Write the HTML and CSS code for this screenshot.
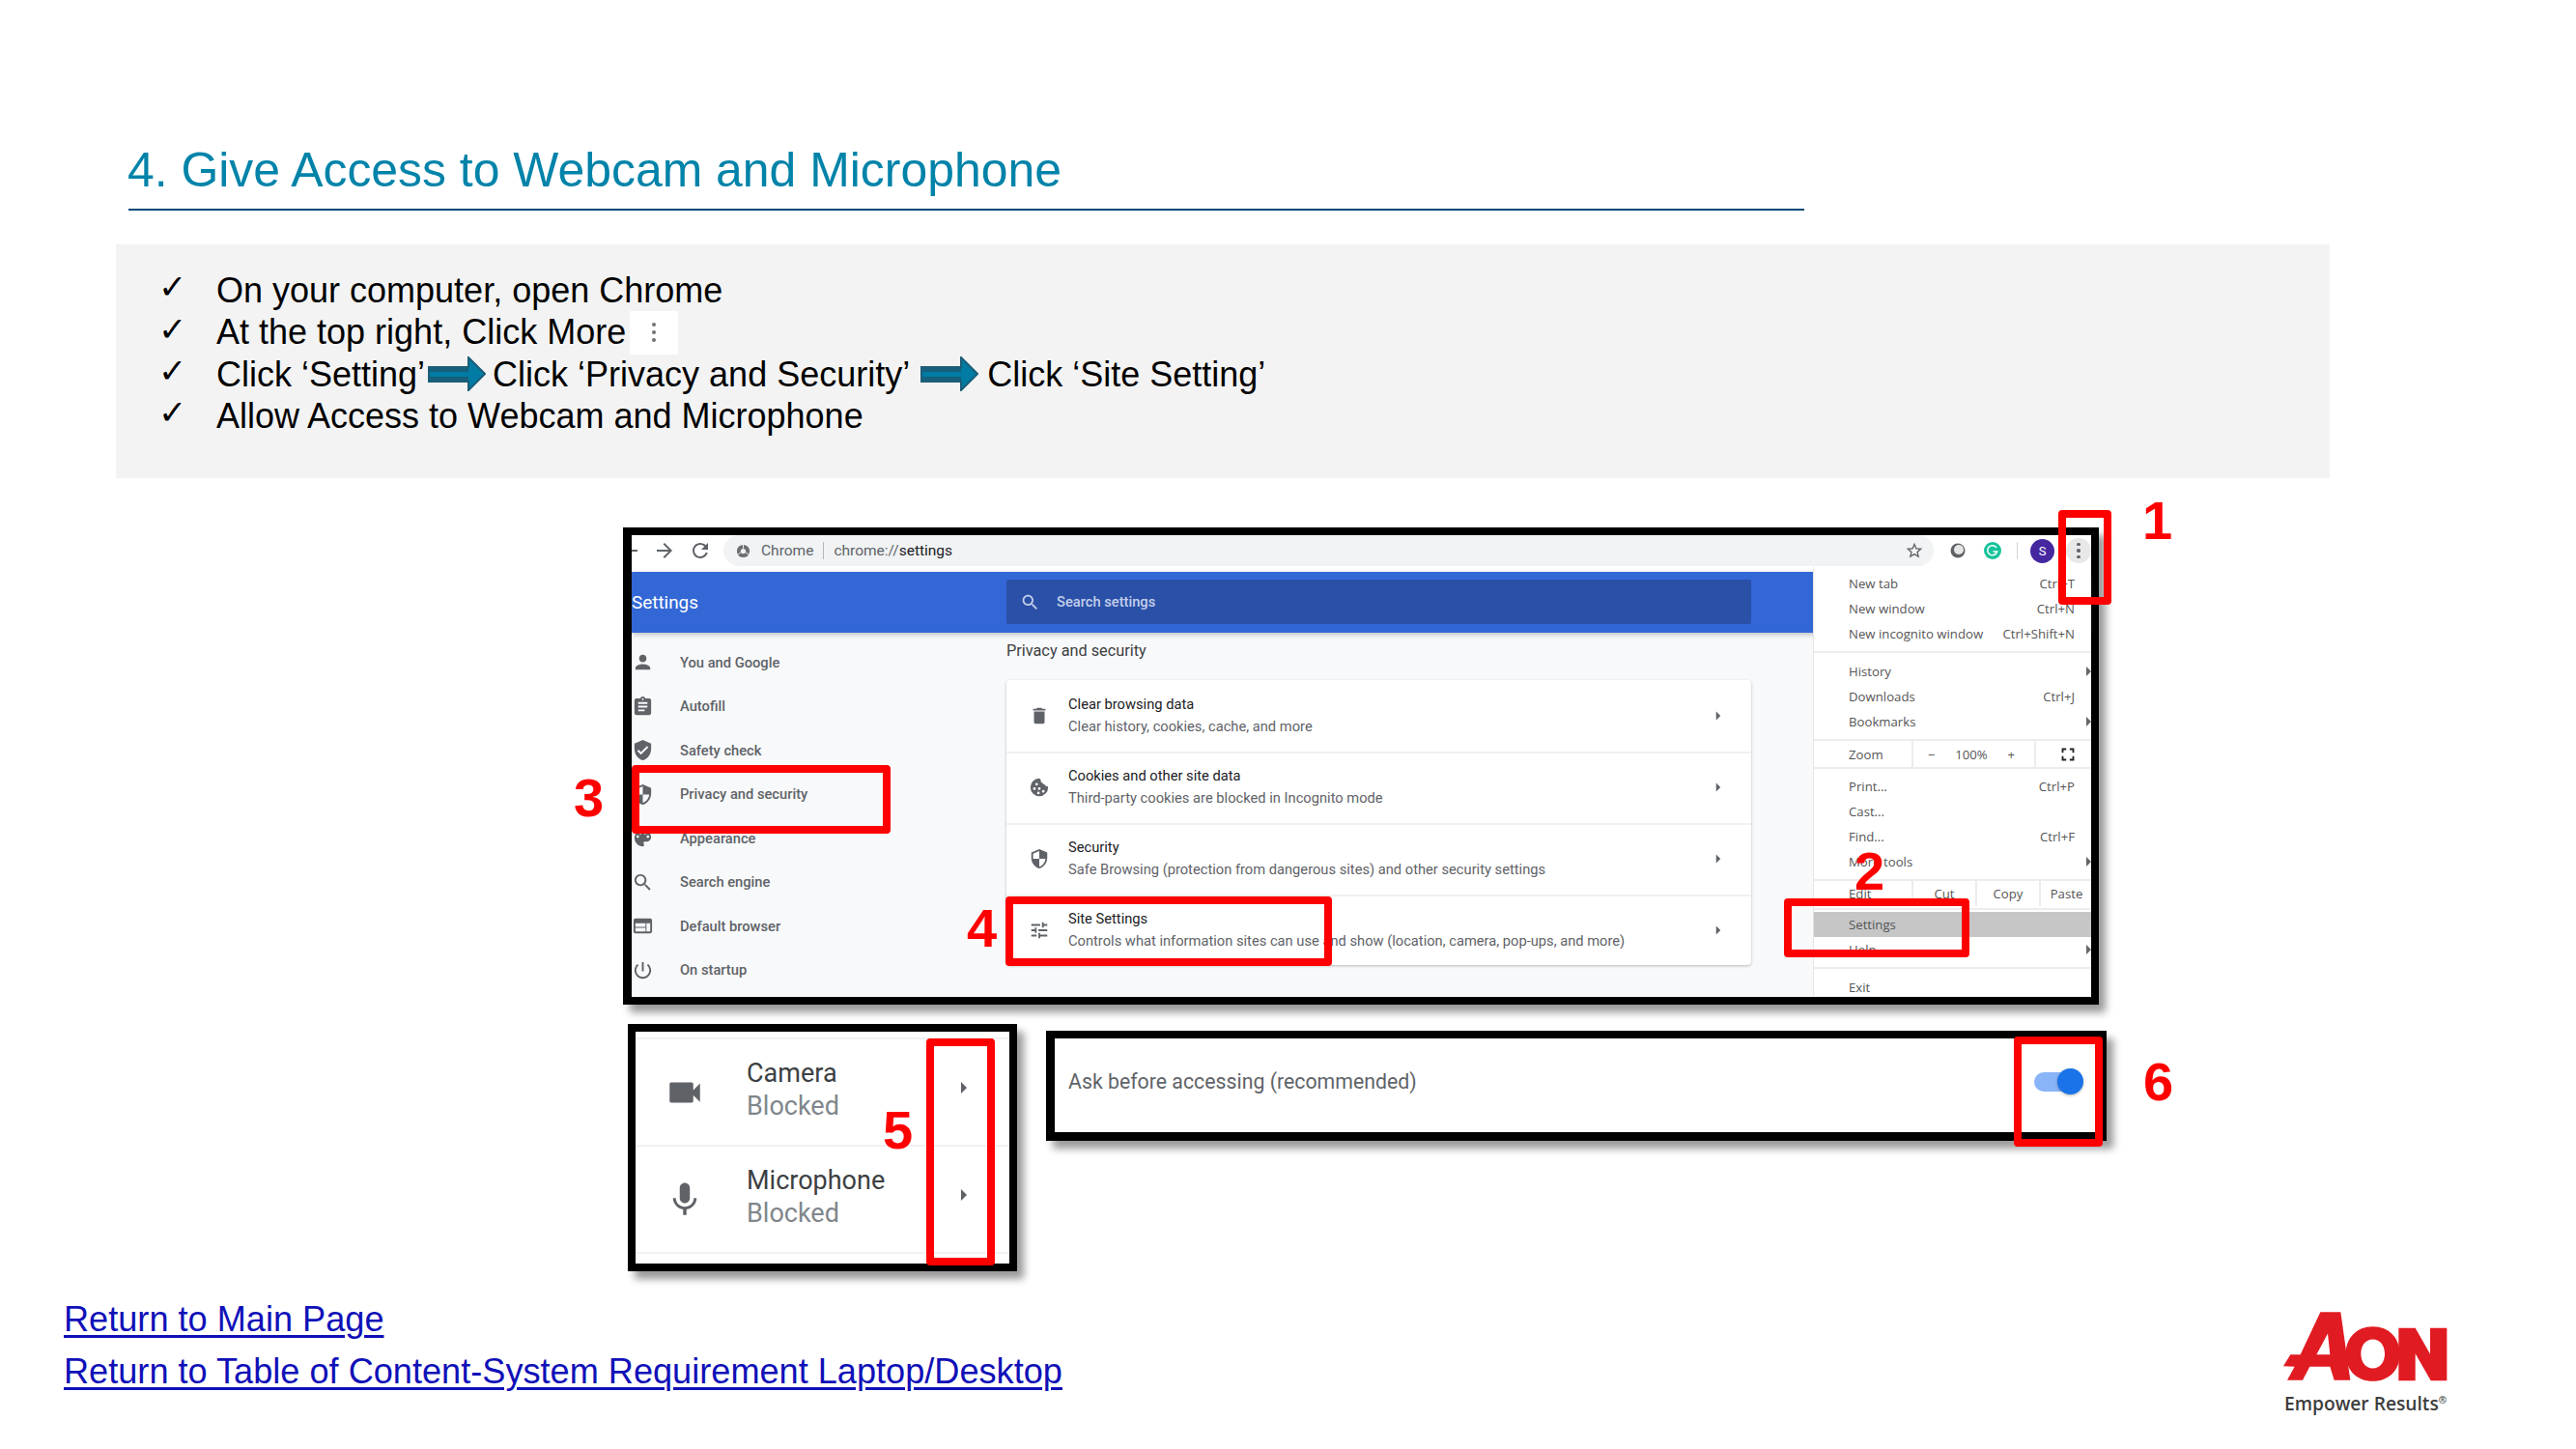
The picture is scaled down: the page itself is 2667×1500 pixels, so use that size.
FILE: index.html
```html
<!DOCTYPE html>
<html lang="en">
<head>
<meta charset="utf-8">
<title>4. Give Access to Webcam and Microphone</title>
<link rel="stylesheet" href="styles.css">
</head>
<body>
<svg class="defs" width="0" height="0" aria-hidden="true">
  <symbol id="i-person" viewBox="0 0 24 24"><path d="M12 12c2.21 0 4-1.79 4-4s-1.79-4-4-4-4 1.79-4 4 1.79 4 4 4zm0 2c-2.67 0-8 1.34-8 4v2h16v-2c0-2.66-5.33-4-8-4z"/></symbol>
  <symbol id="i-assign" viewBox="0 0 24 24"><path d="M19 3h-4.18C14.4 1.84 13.3 1 12 1c-1.3 0-2.4.84-2.82 2H5c-1.1 0-2 .9-2 2v14c0 1.1.9 2 2 2h14c1.1 0 2-.9 2-2V5c0-1.1-.9-2-2-2zm-7 0c.55 0 1 .45 1 1s-.45 1-1 1-1-.45-1-1 .45-1 1-1zm2 14H7v-2h7v2zm3-4H7v-2h10v2zm0-4H7V7h10v2z"/></symbol>
  <symbol id="i-verified" viewBox="0 0 24 24"><path d="M12 1L3 5v6c0 5.55 3.84 10.74 9 12 5.16-1.26 9-6.45 9-12V5l-9-4zm-2 16l-4-4 1.41-1.41L10 14.17l6.59-6.59L18 9l-8 8z"/></symbol>
  <symbol id="i-security" viewBox="0 0 24 24"><path d="M12 1L3 5v6c0 5.55 3.84 10.74 9 12 5.16-1.26 9-6.45 9-12V5l-9-4zm0 10.99h7c-.53 4.12-3.28 7.79-7 8.94V12H5V6.3l7-3.11v8.8z"/></symbol>
  <symbol id="i-palette" viewBox="0 0 24 24"><path d="M12 3c-4.97 0-9 4.03-9 9s4.03 9 9 9c.83 0 1.5-.67 1.5-1.5 0-.39-.15-.74-.39-1.01-.23-.26-.38-.61-.38-.99 0-.83.67-1.5 1.5-1.5H16c2.76 0 5-2.24 5-5 0-4.42-4.03-8-9-8zm-5.5 9c-.83 0-1.5-.67-1.5-1.5S5.67 9 6.5 9 8 9.67 8 10.5 7.33 12 6.5 12zm3-4C8.67 8 8 7.33 8 6.5S8.67 5 9.5 5s1.5.67 1.5 1.5S10.33 8 9.5 8zm5 0c-.83 0-1.5-.67-1.5-1.5S13.67 5 14.5 5s1.5.67 1.5 1.5S15.33 8 14.5 8zm3 4c-.83 0-1.5-.67-1.5-1.5S16.67 9 17.5 9s1.5.67 1.5 1.5-.67 1.5-1.5 1.5z"/></symbol>
  <symbol id="i-search" viewBox="0 0 24 24"><path d="M15.5 14h-.79l-.28-.27C15.41 12.59 16 11.11 16 9.5 16 5.91 13.09 3 9.5 3S3 5.91 3 9.5 5.91 16 9.5 16c1.61 0 3.09-.59 4.23-1.57l.27.28v.79l5 4.99L20.49 19l-4.99-5zm-6 0C7.01 14 5 11.99 5 9.5S7.01 5 9.5 5 14 7.01 14 9.5 11.99 14 9.5 14z"/></symbol>
  <symbol id="i-web" viewBox="0 0 24 24"><path d="M20 4H4c-1.1 0-1.99.9-1.99 2L2 18c0 1.1.9 2 2 2h16c1.1 0 2-.9 2-2V6c0-1.1-.9-2-2-2zm-5 14H4v-4h11v4zm0-5H4V9h11v4zm5 5h-4V9h4v9z"/></symbol>
  <symbol id="i-power" viewBox="0 0 24 24"><path d="M13 3h-2v10h2V3zm4.83 2.17l-1.42 1.42C17.99 7.86 19 9.81 19 12c0 3.87-3.13 7-7 7s-7-3.13-7-7c0-2.19 1.01-4.14 2.58-5.42L6.17 5.17C4.23 6.82 3 9.26 3 12c0 4.97 4.03 9 9 9s9-4.03 9-9c0-2.74-1.23-5.18-3.17-6.83z"/></symbol>
  <symbol id="i-delete" viewBox="0 0 24 24"><path d="M6 19c0 1.1.9 2 2 2h8c1.1 0 2-.9 2-2V7H6v12zM19 4h-3.5l-1-1h-5l-1 1H5v2h14V4z"/></symbol>
  <symbol id="i-cookie" viewBox="0 0 24 24"><path fill-rule="evenodd" d="M12 2a10 10 0 1 0 10 10c-.3-1.2-1.6-1.5-2.4-1-.9-.6-1-1.700-1.600-2.200-1.100.2-2-.6-2-1.800-1.400.1-2.400-1-2.200-2.200C13.500 3.600 13.200 2.400 12 2zM9 7a1.500 1.500 0 1 1 0 3 1.500 1.500 0 0 1 0-3zM6.500 12a1.500 1.500 0 1 1 0 3 1.500 1.500 0 0 1 0-3zM12 12a1.500 1.500 0 1 1 0 3 1.500 1.500 0 0 1 0-3zM11 17a1.500 1.500 0 1 1 0 3 1.500 1.500 0 0 1 0-3zM16.500 15a1.500 1.500 0 1 1 0 3 1.500 1.500 0 0 1 0-3z"/></symbol>
  <symbol id="i-tune" viewBox="0 0 24 24"><path d="M3 17v2h6v-2H3zM3 5v2h10V5H3zm10 16v-2h8v-2h-8v-2h-2v6h2zM7 9v2H3v2h4v2h2V9H7zm14 4v-2H11v2h10zm-6-4h2V7h4V5h-4V3h-2v6z"/></symbol>
  <symbol id="i-video" viewBox="0 0 24 24"><path d="M17 10.500V7c0-.55-.45-1-1-1H4c-.55 0-1 .45-1 1v10c0 .55.45 1 1 1h12c.55 0 1-.45 1-1v-3.500l4 4v-11l-4 4z"/></symbol>
  <symbol id="i-mic" viewBox="0 0 24 24"><path d="M12 14c1.660 0 2.990-1.340 2.990-3L15 5c0-1.660-1.340-3-3-3S9 3.340 9 5v6c0 1.660 1.340 3 3 3zm5.300-3c0 3-2.540 5.100-5.300 5.100S6.700 14 6.700 11H5c0 3.410 2.720 6.230 6 6.720V21h2v-3.280c3.280-.48 6-3.300 6-6.720h-1.700z"/></symbol>
  <symbol id="i-star" viewBox="0 0 24 24"><path d="M22 9.240l-7.190-.62L12 2 9.190 8.630 2 9.240l5.460 4.730L5.820 21 12 17.270 18.180 21l-1.630-7.030L22 9.240zM12 15.400l-3.760 2.270 1-4.280-3.320-2.880 4.380-.38L12 6.100l1.710 4.040 4.380.38-3.320 2.880 1 4.280L12 15.400z"/></symbol>
  <symbol id="i-forward" viewBox="0 0 24 24"><path d="M12 4l-1.410 1.410L16.170 11H4v2h12.170l-5.580 5.590L12 20l8-8z"/></symbol>
  <symbol id="i-refresh" viewBox="0 0 24 24"><path d="M17.650 6.350C16.200 4.900 14.210 4 12 4c-4.420 0-7.990 3.580-7.990 8s3.570 8 7.990 8c3.730 0 6.840-2.550 7.730-6h-2.080c-.82 2.330-3.040 4-5.650 4-3.310 0-6-2.690-6-6s2.690-6 6-6c1.660 0 3.140.69 4.220 1.780L13 11h7V4l-2.350 2.350z"/></symbol>
  <symbol id="i-full" viewBox="0 0 24 24"><path d="M7 14H5v5h5v-2H7v-3zm-2-4h2V7h3V5H5v5zm12 7h-3v2h5v-5h-2v3zM14 5v2h3v3h2V5h-5z"/></symbol>
  <symbol id="i-chev" viewBox="0 0 8 14"><path d="M1 1l6 6-6 6z"/></symbol>
  <symbol id="i-arrow" viewBox="0 0 60 36"><path d="M1 11h41V1l17 17-17 17V26H1z" fill="#007ba3" stroke="#1c5d78" stroke-width="2"/><path d="M2 12h40v4H2zM2 21h40v4H2z" fill="#155f7c"/></symbol>
</svg>

<main class="slide">
  <header class="head">
    <h1 class="title">4. Give Access to Webcam and Microphone</h1>
    <div class="rule"></div>
  </header>

  <section class="panel">
    <div class="step"><span class="tick">✓</span><span>On your computer, open Chrome</span></div>
    <div class="step"><span class="tick">✓</span><span>At the top right, Click More</span>
      <span class="more"><i></i><i></i><i></i></span></div>
    <div class="step"><span class="tick">✓</span><span>Click ‘Setting’</span>
      <svg class="arrow arrow-a"><use href="#i-arrow"/></svg><span>Click ‘Privacy and Security’</span>
      <svg class="arrow arrow-b"><use href="#i-arrow"/></svg><span>Click ‘Site Setting’</span></div>
    <div class="step"><span class="tick">✓</span><span>Allow Access to Webcam and Microphone</span></div>
  </section>

  <section class="frame chrome">
    <div class="toolbar">
      <span class="back-stub"></span>
      <svg class="tb-ico tb-forward"><use href="#i-forward"/></svg>
      <svg class="tb-ico tb-reload"><use href="#i-refresh"/></svg>
      <div class="omni">
        <svg class="globe" viewBox="0 0 16 16"><circle cx="8" cy="8" r="7" fill="#6b7074"/><circle cx="8" cy="8" r="2.800" fill="#f1f3f4"/><path d="M8 1v4M2.500 11.500L6 9M13.500 11.500L10 9" stroke="#f1f3f4" stroke-width="1"/></svg>
        <span class="omni-site">Chrome</span>
        <span class="omni-sep"></span>
        <span class="omni-url"><span class="scheme">chrome://</span>settings</span>
        <svg class="omni-star"><use href="#i-star"/></svg>
      </div>
      <svg class="ext-a" viewBox="0 0 18 18"><circle cx="9" cy="9" r="7.500" fill="#5f6368"/><circle cx="10" cy="8" r="5" fill="#e6e6e6"/></svg>
      <svg class="ext-g" viewBox="0 0 18 18"><circle cx="9" cy="9" r="9" fill="#15c39a"/><path d="M13 6a5 5 0 1 0 .6 4H9.500" fill="none" stroke="#fff" stroke-width="1.500"/></svg>
      <span class="tb-sep"></span>
      <span class="avatar">S</span>
      <span class="kebab"><i></i><i></i><i></i></span>
    </div>

    <div class="s-head">
      <div class="s-title">Settings</div>
      <div class="s-search">
        <svg class="s-search-ico"><use href="#i-search"/></svg>
        <span>Search settings</span>
      </div>
    </div>

    <div class="s-body">
      <nav class="side">
        <div class="side-item"><svg><use href="#i-person"/></svg><span>You and Google</span></div>
        <div class="side-item"><svg><use href="#i-assign"/></svg><span>Autofill</span></div>
        <div class="side-item"><svg><use href="#i-verified"/></svg><span>Safety check</span></div>
        <div class="side-item"><svg><use href="#i-security"/></svg><span>Privacy and security</span></div>
        <div class="side-item"><svg><use href="#i-palette"/></svg><span>Appearance</span></div>
        <div class="side-item"><svg><use href="#i-search"/></svg><span>Search engine</span></div>
        <div class="side-item"><svg><use href="#i-web"/></svg><span>Default browser</span></div>
        <div class="side-item"><svg><use href="#i-power"/></svg><span>On startup</span></div>
      </nav>
      <div class="content">
        <h2 class="c-head">Privacy and security</h2>
        <div class="card">
          <div class="row"><svg class="row-ico"><use href="#i-delete"/></svg>
            <div class="row-text"><div class="row-t">Clear browsing data</div><div class="row-s">Clear history, cookies, cache, and more</div></div>
            <svg class="chev"><use href="#i-chev"/></svg></div>
          <div class="row"><svg class="row-ico"><use href="#i-cookie"/></svg>
            <div class="row-text"><div class="row-t">Cookies and other site data</div><div class="row-s">Third-party cookies are blocked in Incognito mode</div></div>
            <svg class="chev"><use href="#i-chev"/></svg></div>
          <div class="row"><svg class="row-ico"><use href="#i-security"/></svg>
            <div class="row-text"><div class="row-t">Security</div><div class="row-s">Safe Browsing (protection from dangerous sites) and other security settings</div></div>
            <svg class="chev"><use href="#i-chev"/></svg></div>
          <div class="row"><svg class="row-ico"><use href="#i-tune"/></svg>
            <div class="row-text"><div class="row-t">Site Settings</div><div class="row-s">Controls what information sites can use and show (location, camera, pop-ups, and more)</div></div>
            <svg class="chev"><use href="#i-chev"/></svg></div>
        </div>
      </div>
    </div>

    <div class="menu">
      <div class="m-group m-first">
        <div class="m-row"><span>New tab</span><span>Ctrl+T</span></div>
        <div class="m-row"><span>New window</span><span>Ctrl+N</span></div>
        <div class="m-row"><span>New incognito window</span><span>Ctrl+Shift+N</span></div>
      </div>
      <div class="m-group">
        <div class="m-row m-sub"><span>History</span></div>
        <div class="m-row"><span>Downloads</span><span>Ctrl+J</span></div>
        <div class="m-row m-sub"><span>Bookmarks</span></div>
      </div>
      <div class="m-cells m-zoom">
        <div class="m-cell m-label">Zoom</div>
        <div class="m-cell m-zoomctl"><span>−</span><span>100%</span><span>+</span></div>
        <div class="m-cell"><svg class="m-full"><use href="#i-full"/></svg></div>
      </div>
      <div class="m-group m-mid">
        <div class="m-row"><span>Print...</span><span>Ctrl+P</span></div>
        <div class="m-row"><span>Cast...</span></div>
        <div class="m-row"><span>Find...</span><span>Ctrl+F</span></div>
        <div class="m-row m-sub"><span>More tools</span></div>
      </div>
      <div class="m-cells m-edit">
        <div class="m-cell m-label">Edit</div>
        <div class="m-cell">Cut</div>
        <div class="m-cell">Copy</div>
        <div class="m-cell">Paste</div>
      </div>
      <div class="m-settings">
        <div class="m-row m-hot"><span>Settings</span></div>
        <div class="m-row m-sub"><span>Help</span></div>
      </div>
      <div class="m-group m-last">
        <div class="m-row"><span>Exit</span></div>
      </div>
    </div>
  </section>

  <section class="lower">
    <div class="frame perms">
      <div class="perm">
        <svg class="perm-ico"><use href="#i-video"/></svg>
        <div class="perm-text"><div class="perm-t">Camera</div><div class="perm-s">Blocked</div></div>
        <svg class="perm-chev"><use href="#i-chev"/></svg>
      </div>
      <div class="perm">
        <svg class="perm-ico"><use href="#i-mic"/></svg>
        <div class="perm-text"><div class="perm-t">Microphone</div><div class="perm-s">Blocked</div></div>
        <svg class="perm-chev"><use href="#i-chev"/></svg>
      </div>
    </div>
    <div class="frame ask">
      <span class="ask-text">Ask before accessing (recommended)</span>
      <span class="toggle"><span class="thumb"></span></span>
    </div>
  </section>

  <footer class="foot">
    <div class="links">
      <a class="link" href="#main">Return to Main Page</a>
      <a class="link" href="#toc">Return to Table of Content-System Requirement Laptop/Desktop</a>
    </div>
    <div class="brand">
      <svg class="aon" viewBox="70 55 510 215" role="img" aria-label="Aon logo">
        <path fill="#e11b22" fill-rule="evenodd" d="M70 223L92 187H123L185 55H248L278 267H228L215 225H152L130 267H82L105 225zM208 122L173 187H215z"/>
        <path fill="#e11b22" fill-rule="evenodd" d="M348 100C398 100 432 135 432 185C432 235 398 270 348 270C298 270 264 235 264 185C264 135 298 100 348 100zM348 140C325 140 311 160 311 185C311 210 325 230 348 230C371 230 385 210 385 185C385 160 371 140 348 140z"/>
        <path fill="#e11b22" d="M428 105H480L526 186V105H578V268H528L480 184V268H428z"/>
      </svg>
      <div class="tagline">Empower Results<sup>®</sup></div>
    </div>
  </footer>

  <div class="mark mark-1"></div>
  <div class="mark mark-2"></div>
  <div class="mark mark-3"></div>
  <div class="mark mark-4"></div>
  <div class="mark mark-5"></div>
  <div class="mark mark-6"></div>
  <div class="num num-1">1</div>
  <div class="num num-2">2</div>
  <div class="num num-3">3</div>
  <div class="num num-4">4</div>
  <div class="num num-5">5</div>
  <div class="num num-6">6</div>
</main>
</body>
</html>
```

FILE: styles.css
```css
* { box-sizing: border-box; }
html, body { margin: 0; padding: 0; background: #fff; }
.defs { position: absolute; }

.slide {
  position: relative;
  width: 2667px;
  height: 1500px;
  overflow: hidden;
  font-family: "Liberation Sans", Arial, sans-serif;
  color: #000;
}

/* header */
.head { padding: 146px 0 0 132px; }
.title {
  margin: 0;
  font-size: 49.900px;
  font-weight: 400;
  line-height: 60px;
  color: #0083a9;
}
.rule { width: 1735px; height: 2px; margin-top: 10px; margin-left: 1px; background: #004a78; }

/* instructions */
.panel {
  width: 2292px;
  height: 242px;
  margin: 35px 0 0 120px;
  padding: 26px 0 0 44px;
  background: #f3f3f3;
  font-size: 36px;
  line-height: 43.400px;
}
.step { display: flex; align-items: center; height: 43.400px; white-space: pre; }
.tick {
  width: 60px;
  font-family: "DejaVu Sans", sans-serif;
  font-size: 35px;
  line-height: 30px;
  margin-top: -7px;
}
.more {
  display: flex;
  flex-direction: column;
  align-items: center;
  justify-content: center;
  gap: 4px;
  width: 50px;
  height: 45px;
  margin-left: 4px;
  background: #fff;
}
.more i { width: 4px; height: 4px; border-radius: 50%; background: #6e7276; }
.arrow { width: 60px; height: 36px; flex: none; }
.arrow-a { margin: 0 7px 0 3px; }
.arrow-b { margin: 0 9px 0 11px; }

/* black framed screenshots */
.frame {
  border: 8px solid #000;
  background: #fff;
  box-shadow: 7px 8px 8px rgba(0, 0, 0, .4);
}
.chrome {
  position: relative;
  width: 1528px;
  height: 494px;
  margin: 51px 0 0 645px;
  border-left-width: 9px;
  border-bottom-width: 9px;
  overflow: visible;
  font-family: Roboto, "Liberation Sans", sans-serif;
}

/* toolbar */
.toolbar { display: flex; align-items: center; height: 38px; padding-bottom: 6px; background: #fff; }
.back-stub { width: 6px; height: 2px; background: #5f6368; }
.tb-ico { width: 24px; height: 24px; fill: #5f6368; flex: none; }
.tb-forward { margin-left: 16px; }
.tb-reload { margin-left: 13px; }
.omni {
  display: flex;
  align-items: center;
  width: 1254px;
  height: 32px;
  margin-left: 12px;
  padding-left: 13px;
  background: #f1f3f4;
  border-radius: 16px;
  font-size: 15.500px;
  color: #5f6368;
}
.globe { width: 15px; height: 15px; flex: none; }
.omni-site { margin-left: 11px; }
.omni-sep { width: 1px; height: 18px; margin: 0 10px; background: #b5b8bb; }
.omni-url { color: #202124; }
.scheme { color: #5f6368; }
.omni-star { width: 20px; height: 20px; margin-left: auto; margin-right: 10px; fill: #5f6368; }
.ext-a { width: 18px; height: 18px; margin-left: 16px; flex: none; }
.ext-g { width: 18px; height: 18px; margin-left: 18px; flex: none; }
.tb-sep { width: 1px; height: 18px; margin-left: 16px; background: #d5d5d5; }
.avatar {
  display: flex;
  align-items: center;
  justify-content: center;
  width: 25px;
  height: 25px;
  margin-left: 13px;
  border-radius: 50%;
  background: #4527a0;
  color: #fff;
  font-size: 13px;
}
.kebab {
  display: flex;
  flex-direction: column;
  align-items: center;
  justify-content: center;
  gap: 3px;
  width: 26px;
  height: 26px;
  margin-left: 12px;
  border-radius: 50%;
  background: #e8e8e8;
}
.kebab i { width: 3.500px; height: 3.500px; border-radius: 50%; background: #5f6368; }

/* settings head */
.s-head {
  position: relative;
  display: flex;
  align-items: center;
  height: 63px;
  background: #3367d6;
  box-shadow: 0 2px 5px rgba(60, 64, 67, .3);
}
.s-title { width: 388px; font-size: 18.900px; color: #fff; }
.s-search {
  display: flex;
  align-items: center;
  width: 771px;
  height: 46px;
  margin-top: -1px;
  padding-left: 14px;
  border-radius: 2px;
  background: #2a50a7;
  color: #c3cfec;
  font-size: 14.700px;
  font-weight: 500;
}
.s-search-ico { width: 21px; height: 21px; margin-right: 17px; fill: #c3cfec; }

/* settings body */
.s-body { display: flex; height: 377px; background: #f8f9fa; }
.side { width: 388px; padding-top: 8px; flex: none; }
.side-item {
  display: flex;
  align-items: center;
  height: 45.500px;
  font-size: 14.700px;
  font-weight: 500;
  color: #5f6368;
}
.side-item svg { width: 23px; height: 23px; margin-right: 27px; flex: none; fill: #5f6368; }
.content { width: 771px; }
.c-head {
  margin: 0;
  padding-top: 9px;
  height: 49px;
  font-size: 16.300px;
  font-weight: 400;
  line-height: 20px;
  color: #3c4043;
}
.card {
  height: 295px;
  border-radius: 4px;
  background: #fff;
  box-shadow: 0 1px 3px rgba(60, 64, 67, .35);
}
.row {
  display: flex;
  align-items: center;
  height: 74px;
  padding: 0 0 2px 23px;
  border-top: 2px solid #f1f1f1;
}
.row:first-child { padding-bottom: 0; border-top: 0; }
.row-ico { width: 22px; height: 22px; margin: 0 19px 0 0; flex: none; fill: #5f6368; }
.row-text { flex: 1; }
.row-t { font-size: 14.700px; line-height: 23px; color: #202124; }
.row-s { font-size: 14.700px; line-height: 23px; color: #5f6368; }
.chev { width: 6px; height: 12px; margin: 0 31px 0 0; fill: #5f6368; }

/* chrome menu */
.menu {
  position: absolute;
  top: 33px;
  right: 0;
  bottom: 0;
  width: 288px;
  overflow: hidden;
  background: #fff;
  border-left: 1px solid #e4e4e4;
  font-family: "Open Sans", sans-serif;
  font-size: 13.200px;
  color: #555;
}
.m-group { padding: 6px 0 5px; border-top: 2px solid #ececec; }
.m-first { padding-top: 4px; border-top: 0; }
.m-mid { padding-top: 5px; }
.m-row {
  position: relative;
  display: flex;
  align-items: center;
  justify-content: space-between;
  height: 26px;
  padding: 0 17px 0 36px;
}
.m-sub::after {
  content: "";
  position: absolute;
  right: 0;
  top: 8px;
  border: 5px solid transparent;
  border-left-color: #666;
  border-right-width: 0;
}
.m-cells { display: grid; height: 29px; border-top: 2px solid #ececec; }
.m-zoom { grid-template-columns: 101px 127px 60px; }
.m-edit { grid-template-columns: 101px 66px 66px 55px; height: 30px; padding-bottom: 2px; }
.m-cell {
  display: flex;
  align-items: center;
  justify-content: center;
  border-left: 2px solid #ececec;
}
.m-label { justify-content: flex-start; padding-left: 36px; border-left: 0; }
.m-zoomctl { justify-content: space-between; padding: 0 20px 0 15px; }
.m-full { width: 22px; height: 22px; fill: #222; margin-left: 8px; }
.m-settings { padding: 2px 0 5px; border-top: 2px solid #ececec; }
.m-hot { background: #c6c6c6; }
.m-last { padding-top: 6px; }

/* lower row */
.lower { display: flex; align-items: flex-start; gap: 30px; margin: 20px 0 0 650px; }
.perms { width: 403px; height: 256px; padding-top: 6px; font-family: Roboto, "Liberation Sans", sans-serif; }
.perm {
  display: flex;
  align-items: center;
  height: 111px;
  padding-left: 30px;
  border-top: 2px solid #f1f1f1;
}
.perm + .perm { height: 113px; border-bottom: 2px solid #f1f1f1; }
.perm-ico { width: 42px; height: 42px; margin-right: 43px; flex: none; fill: #5f6368; }
.perm-text { flex: 1; margin-top: -4px; }
.perm-t { font-size: 27px; line-height: 33px; color: #3c4043; }
.perm-s { font-size: 27px; line-height: 34px; color: #80868b; }
.perm-chev { width: 8px; height: 14px; margin: -10px 43px 0 0; fill: #5f6368; }

.ask {
  display: flex;
  align-items: center;
  justify-content: space-between;
  width: 1098px;
  height: 114px;
  margin-top: 7px;
  padding: 0 13px 8px 14px;
  border-left-width: 9px;
  border-right-width: 12px;
  border-bottom-width: 9px;
  font-family: Roboto, "Liberation Sans", sans-serif;
  font-size: 21.300px;
  color: #5f6368;
}
.toggle {
  position: relative;
  width: 50px;
  height: 20px;
  border-radius: 10px;
  background: #8ab4f8;
}
.thumb {
  position: absolute;
  top: -4px;
  right: -1px;
  width: 27px;
  height: 27px;
  border-radius: 50%;
  background: #1a73e8;
  box-shadow: 0 1px 3px rgba(0, 0, 0, .3);
}

/* footer */
.foot {
  display: flex;
  justify-content: space-between;
  margin-top: 23px;
  padding: 0 133px 0 66px;
}
.links { display: flex; flex-direction: column; align-items: flex-start; }
.link {
  font-size: 36.150px;
  line-height: 54px;
  color: #1010b8;
  text-decoration: underline;
  text-decoration-thickness: 3px;
  text-underline-offset: 4px;
}
.brand { width: 170px; margin-top: 19px; }
.aon { display: block; width: 170px; height: 72px; overflow: visible; }
.tagline {
  margin: 10px 0 0 1px;
  font-family: "Open Sans", sans-serif;
  font-size: 19.200px;
  font-weight: 600;
  line-height: 26px;
  white-space: nowrap;
  color: #3d3d3d;
}
.tagline sup { font-size: 10px; line-height: 0; }

/* red annotations over the screenshots */
.mark { position: absolute; border: 8px solid #f00; border-radius: 4px; }
.mark-1 { left: 2131px; top: 528px; width: 55px; height: 98px; }
.mark-2 { left: 1847px; top: 930px; width: 192px; height: 61px; }
.mark-3 { left: 654px; top: 792px; width: 268px; height: 71px; }
.mark-4 { left: 1041px; top: 928px; width: 338px; height: 72px; }
.mark-5 { left: 959px; top: 1075px; width: 71px; height: 235px; }
.mark-6 { left: 2085px; top: 1073px; width: 92px; height: 114px; }
.num { position: absolute; font-size: 56px; font-weight: 700; line-height: 56px; color: #f00; }
.num-1 { left: 2218px; top: 511px; }
.num-2 { left: 1920px; top: 874px; }
.num-3 { left: 594px; top: 798px; }
.num-4 { left: 1001px; top: 933px; }
.num-5 { left: 914px; top: 1142px; }
.num-6 { left: 2219px; top: 1092px; }
```
